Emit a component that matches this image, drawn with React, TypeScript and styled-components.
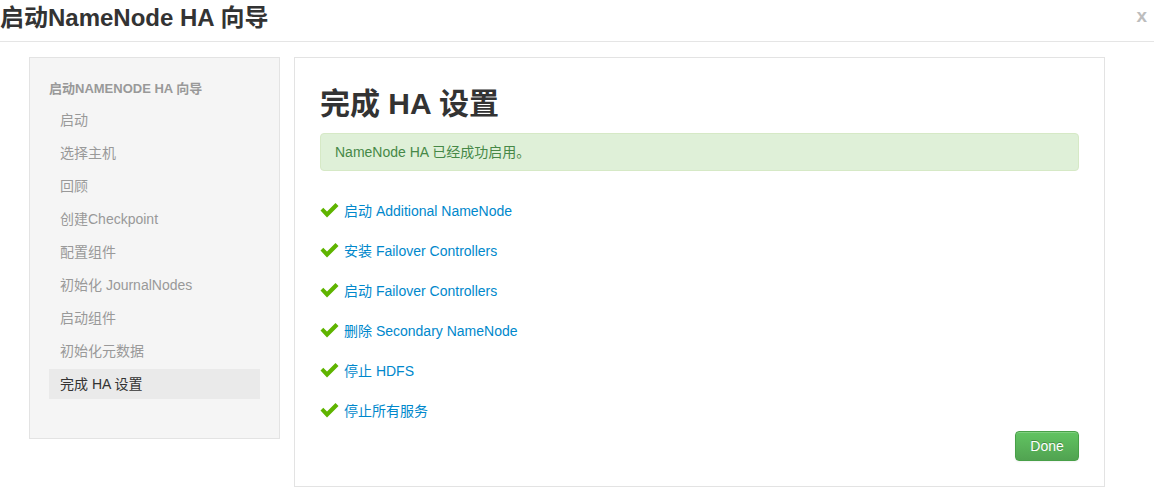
import React from "react";
import styled, { createGlobalStyle } from "styled-components";

const Global = createGlobalStyle`
  html, body { margin: 0; padding: 0; background: #fff; }
  body {
    font-family: "Liberation Sans", Arial, "Noto Sans CJK SC", sans-serif;
    font-size: 14px;
    color: #333;
  }
  * { box-sizing: border-box; }
`;

const Page = styled.div`
  width: 1154px;
  height: 503px;
  overflow: hidden;
`;

const Header = styled.div`
  height: 42px;
  border-bottom: 1px solid #e5e5e5;
  display: flex;
  align-items: flex-start;
  justify-content: space-between;
  padding: 2px 0 0 0;
`;

const Title = styled.h3`
  margin: 0;
  font-size: 24px;
  line-height: 32px;
  font-weight: bold;
  color: #333;
`;

const Close = styled.span`
  font-size: 19px;
  font-weight: bold;
  color: #bdbdbd;
  line-height: 22px;
  margin: 3px 7px 0 0;
`;

const Body = styled.div`
  display: flex;
  align-items: flex-start;
  gap: 14px;
  padding: 15px 0 0 29px;
`;

const Sidebar = styled.div`
  width: 251px;
  height: 382px;
  background: #f5f5f5;
  border: 1px solid #e3e3e3;
  padding: 21px 19px 0 19px;
`;

const NavHeader = styled.div`
  font-size: 13px;
  font-weight: bold;
  color: #999;
  text-transform: uppercase;
  line-height: 20px;
  height: 26px;
`;

const NavItem = styled.div<{ $active?: boolean }>`
  height: 30px;
  line-height: 30px;
  margin-bottom: 3px;
  padding-left: 11px;
  font-size: 14px;
  color: ${(p) => (p.$active ? "#333" : "#999")};
  background: ${(p) => (p.$active ? "#eaeaea" : "transparent")};
`;

const Main = styled.div`
  width: 811px;
  height: 430px;
  border: 1px solid #e3e3e3;
  padding: 26px 25px 0 25px;
  display: flex;
  flex-direction: column;
`;

const MainTitle = styled.h2`
  margin: 0;
  font-size: 30px;
  line-height: 40px;
  font-weight: bold;
  color: #333;
`;

const Alert = styled.div`
  margin-top: 9px;
  height: 38px;
  background: #dff0d8;
  border: 1px solid #d6e9c6;
  border-radius: 4px;
  color: #468847;
  font-size: 14px;
  line-height: 36px;
  padding-left: 14px;
`;

const TaskList = styled.div`
  margin-top: 19px;
  display: flex;
  flex-direction: column;
`;

const Task = styled.div`
  height: 40px;
  display: flex;
  align-items: center;
  gap: 5px;
  color: #0088cc;
  font-size: 14px;
`;

const Footer = styled.div`
  display: flex;
  justify-content: flex-end;
  margin-top: 1px;
`;

const DoneButton = styled.button`
  width: 64px;
  height: 30px;
  border: 1px solid #48a048;
  border-radius: 4px;
  background: linear-gradient(#62c462, #51a351);
  color: #fff;
  font-family: "Liberation Sans", Arial, sans-serif;
  font-size: 14px;
  padding: 0;
  text-shadow: 0 -1px 0 rgba(0,0,0,0.25);
  box-shadow: inset 0 1px 0 rgba(255,255,255,0.2), 0 1px 2px rgba(0,0,0,0.05);
`;

const Check = () => (
  <svg width="19" height="15" viewBox="0 0 19 15">
    <path d="M0.5 7.6 L3.3 4.8 L7 8.5 L15.5 0 L18.5 3 L7 14.5 Z" fill="#5fb400" />
  </svg>
);

const steps = [
  "启动",
  "选择主机",
  "回顾",
  "创建Checkpoint",
  "配置组件",
  "初始化 JournalNodes",
  "启动组件",
  "初始化元数据",
  "完成 HA 设置",
];

const tasks = [
  "启动 Additional NameNode",
  "安装 Failover Controllers",
  "启动 Failover Controllers",
  "删除 Secondary NameNode",
  "停止 HDFS",
  "停止所有服务",
];

export default function App() {
  return (
    <Page>
      <Global />
      <Header>
        <Title>启动NameNode HA 向导</Title>
        <Close>x</Close>
      </Header>
      <Body>
        <Sidebar>
          <NavHeader>启动NameNode HA 向导</NavHeader>
          {steps.map((s, i) => (
            <NavItem key={s} $active={i === steps.length - 1}>
              {s}
            </NavItem>
          ))}
        </Sidebar>
        <Main>
          <MainTitle>完成 HA 设置</MainTitle>
          <Alert>NameNode HA 已经成功启用。</Alert>
          <TaskList>
            {tasks.map((t) => (
              <Task key={t}>
                <Check />
                {t}
              </Task>
            ))}
          </TaskList>
          <Footer>
            <DoneButton>Done</DoneButton>
          </Footer>
        </Main>
      </Body>
    </Page>
  );
}
